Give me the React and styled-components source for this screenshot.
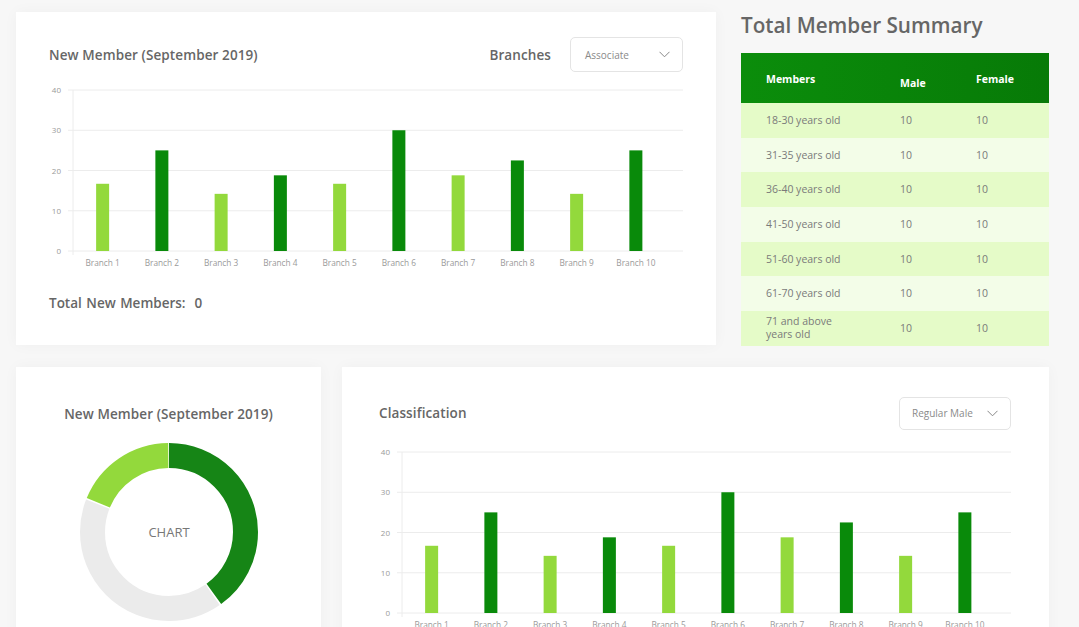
import styled, { createGlobalStyle } from 'styled-components'

const GlobalStyle = createGlobalStyle`
    html, body {
        margin: 0;
        padding: 0;
        background: #f7f7f7;
        font-family: 'Open Sans', 'Liberation Sans', sans-serif;
        color: #666;
    }
`

const LIGHT = '#93d93c'
const DARK = '#098a0a'

const Page = styled.div`
    width: 1079px;
    height: 627px;
    overflow: hidden;
    padding: 12px 30px 0 16px;
    box-sizing: border-box;
    display: flex;
    flex-direction: column;
    gap: 21px;
`
const Row = styled.div`
    display: flex;
    gap: ${(p) => p.gap}px;
    align-items: flex-start;
`
const Card = styled.div`
    background: #fff;
    width: ${(p) => p.width}px;
    height: ${(p) => p.height}px;
    box-sizing: border-box;
    padding: ${(p) => p.pad};
    box-shadow: 0 0 14px rgba(0, 0, 0, 0.035);
    display: flex;
    flex-direction: column;
`
const CardHeader = styled.div`
    display: flex;
    align-items: center;
    justify-content: ${(p) => (p.center ? 'center' : 'space-between')};
    height: ${(p) => p.height || 35}px;
`
const CardTitle = styled.h3`
    margin: 0;
    font-size: 13.5px;
    font-weight: 600;
    color: #666;
    letter-spacing: 0.1px;
`
const Filters = styled.div`
    display: flex;
    align-items: center;
    gap: 19px;
`
const Dropdown = styled.div`
    width: ${(p) => p.width}px;
    height: ${(p) => p.height}px;
    box-sizing: border-box;
    border: 1px solid #e4e4e4;
    border-radius: 5px;
    display: flex;
    align-items: center;
    justify-content: space-between;
    padding: 0 12px 0 ${(p) => p.indent}px;
    font-size: 10px;
    color: #8a8a8a;
`
const ChartWrap = styled.div`
    margin-top: ${(p) => p.top}px;
`
const TotalText = styled.div`
    margin-top: 19px;
    font-size: 13.5px;
    font-weight: 600;
    color: #666;
    word-spacing: 1px;
`
const Summary = styled.div`
    width: 308px;
    display: flex;
    flex-direction: column;
`
const SummaryTitle = styled.h2`
    margin: 0;
    height: 41px;
    font-size: 20.7px;
    font-weight: 600;
    color: #666;
    line-height: 26px;
`
const Table = styled.table`
    width: 100%;
    border-collapse: collapse;
    font-size: 10.5px;
`
const HeadRow = styled.tr`
    height: 50px;
    background: linear-gradient(90deg, #0b8d0b 0%, #077a07 100%);
`
const Th = styled.th`
    text-align: left;
    color: #fff;
    font-weight: 700;
    font-size: 10.5px;
    padding: ${(p) => (p.low ? '10px' : '2px')} 0 0 ${(p) => p.left}px;
    width: ${(p) => p.width}px;
`
const BodyRow = styled.tr`
    height: 34.7px;
    background: ${(p) => (p.odd ? '#e5fbc8' : '#f3fde8')};
`
const Td = styled.td`
    padding: 0 0 0 ${(p) => p.left}px;
    color: #7a7a7a;
    line-height: 13px;
`
const DonutBox = styled.div`
    margin-top: 19px;
    display: flex;
    justify-content: center;
`

function Chevron() {
    return (
        <svg width='11' height='7' viewBox='0 0 11 7'>
            <polyline points='0.5,0.8 5.5,5.8 10.5,0.8' fill='none' stroke='#888' strokeWidth='1' />
        </svg>
    )
}

const values = [16.7, 25, 14.2, 18.8, 16.7, 30, 18.8, 22.5, 14.2, 25]

function BarChart({ width, axisX }) {
    const y0 = 166
    const unit = 4.025
    const band = 59.25
    return (
        <svg width={width} height='190' style={{ display: 'block', fontFamily: "'Open Sans', sans-serif" }}>
            {[0, 10, 20, 30, 40].map((v) => {
                const y = y0 - v * unit
                return (
                    <g key={v}>
                        <line x1={axisX - 5} x2={width} y1={y} y2={y} stroke='#ececec' strokeWidth='1' />
                        <text x={axisX - 12} y={y + 3} fontSize='8' fill='#9a9a9a' textAnchor='end'>
                            {v}
                        </text>
                    </g>
                )
            })}
            <line x1={axisX} x2={axisX} y1={y0 - 40 * unit} y2={y0 + 4} stroke='#ececec' />
            {values.map((v, i) => {
                const cx = axisX + band * i + band / 2
                return (
                    <g key={i}>
                        <rect
                            x={cx - 6.5}
                            y={y0 - v * unit}
                            width='13'
                            height={v * unit}
                            fill={i % 2 === 0 ? LIGHT : DARK}
                        />
                        <text x={cx} y={y0 + 15} fontSize='8.3' fill='#9a9a9a' textAnchor='middle'>
                            Branch {i + 1}
                        </text>
                    </g>
                )
            })}
        </svg>
    )
}

function Donut() {
    const r = 76.5
    const c = 2 * Math.PI * r
    const segs = [
        { from: 0, to: 145, color: '#168516' },
        { from: 145, to: 292, color: '#ebebeb' },
        { from: 292, to: 360, color: '#93d93c' }
    ]
    return (
        <svg width='180' height='180' viewBox='0 0 180 180'>
            <g transform='rotate(-90 90 90)'>
                {segs.map((s) => {
                    const len = ((s.to - s.from) / 360) * c - 1.5
                    return (
                        <circle
                            key={s.from}
                            cx='90'
                            cy='90'
                            r={r}
                            fill='none'
                            stroke={s.color}
                            strokeWidth='25'
                            strokeDasharray={`${len} ${c}`}
                            strokeDashoffset={-((s.from / 360) * c)}
                        />
                    )
                })}
            </g>
            <text x='90' y='95' textAnchor='middle' fontSize='13' fill='#777' fontFamily="'Open Sans', sans-serif">
                CHART
            </text>
        </svg>
    )
}

const rows = [
    '18-30 years old',
    '31-35 years old',
    '36-40 years old',
    '41-50 years old',
    '51-60 years old',
    '61-70 years old',
    '71 and above years old'
]

export default function App() {
    return (
        <>
            <GlobalStyle />
            <Page>
                <Row gap={25}>
                    <Card width={700} height={333} pad='25px 33px 0 33px'>
                        <CardHeader>
                            <CardTitle>New Member (September 2019)</CardTitle>
                            <Filters>
                                <CardTitle>Branches</CardTitle>
                                <Dropdown width={113} height={35} indent={14}>
                                    Associate
                                    <Chevron />
                                </Dropdown>
                            </Filters>
                        </CardHeader>
                        <ChartWrap top={13}>
                            <BarChart width={634} axisX={24} />
                        </ChartWrap>
                        <TotalText>Total New Members:&nbsp; 0</TotalText>
                    </Card>
                    <Summary>
                        <SummaryTitle>Total Member Summary</SummaryTitle>
                        <Table>
                            <thead>
                                <HeadRow>
                                    <Th left={25} width={134}>Members</Th>
                                    <Th left={0} width={76} low>Male</Th>
                                    <Th left={0}>Female</Th>
                                </HeadRow>
                            </thead>
                            <tbody>
                                {rows.map((label, i) => (
                                    <BodyRow key={label} odd={i % 2 === 0}>
                                        <Td left={25}>
                                            {i === 6 ? (
                                                <>
                                                    71 and above
                                                    <br />
                                                    years old
                                                </>
                                            ) : (
                                                label
                                            )}
                                        </Td>
                                        <Td left={0}>10</Td>
                                        <Td left={0}>10</Td>
                                    </BodyRow>
                                ))}
                            </tbody>
                        </Table>
                    </Summary>
                </Row>
                <Row gap={21}>
                    <Card width={305} height={300} pad='38px 0 0 0'>
                        <CardHeader height={18} center>
                            <CardTitle>New Member (September 2019)</CardTitle>
                        </CardHeader>
                        <DonutBox>
                            <Donut />
                        </DonutBox>
                    </Card>
                    <Card width={707} height={300} pad='30px 38px 0 37px'>
                        <CardHeader height={33}>
                            <CardTitle>Classification</CardTitle>
                            <Dropdown width={112} height={33} indent={12}>
                                Regular Male
                                <Chevron />
                            </Dropdown>
                        </CardHeader>
                        <ChartWrap top={17}>
                            <BarChart width={632} axisX={23} />
                        </ChartWrap>
                    </Card>
                </Row>
            </Page>
        </>
    )
}
